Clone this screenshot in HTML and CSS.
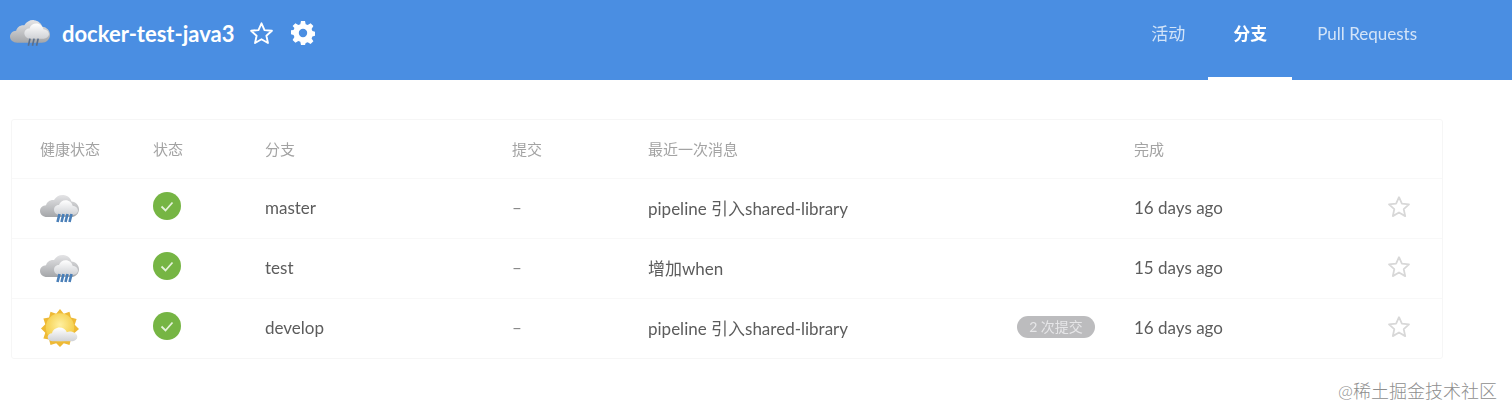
FILE: index.html
```html
<!DOCTYPE html>
<html lang="zh">
<head>
<meta charset="UTF-8" />
<meta name="viewport" content="width=device-width, initial-scale=1" />
<title>docker-test-java3</title>
<link rel="stylesheet" href="styles.css">
</head>
<body>
  <svg class="defs" width="0" height="0" aria-hidden="true">
    <defs>
      <linearGradient id="cloudGrey" x1="0" y1="0" x2="0" y2="1">
        <stop offset="0" stop-color="#e4e4e6" />
        <stop offset="1" stop-color="#a4a6a9" />
      </linearGradient>
      <linearGradient id="cloudLight" x1="0" y1="0" x2="0" y2="1">
        <stop offset="0" stop-color="#ffffff" />
        <stop offset="1" stop-color="#d0d2d6" />
      </linearGradient>
      <radialGradient id="sunFill" cx="0.5" cy="0.4" r="0.6">
        <stop offset="0" stop-color="#fff0a0" />
        <stop offset="1" stop-color="#f3c93f" />
      </radialGradient>
      <symbol id="rain" viewBox="0 0 40 32">
        <path d="M7 24c-4 0-7-2.600-7-6 0-3.200 2.600-5.600 6-5.800C7 8.600 10.400 6.400 14 7c2-3.400 5.600-5.400 9.500-5 4 .4 7 3 8 6.400 4.400.4 7.500 3.800 7.500 7.800 0 4.400-3.500 7.800-8 7.800z" fill="url(#cloudGrey)" />
        <path d="M20 22c-3.600 0-6-2.400-6-5.200 0-2.800 2.200-4.800 5-4.800 1-3 3.600-4.800 6.600-4.800 3.600 0 6.400 2.400 7 5.600 3 .2 5.400 2.400 5.400 4.800 0 2.600-2.400 4.400-5 4.400z" fill="url(#cloudLight)" />
        <path d="M19.500 21l-2 8M23.500 21l-2 8M27.500 21l-2 8M31.500 21l-2 8" stroke="#4a7fb8" stroke-width="2.600" fill="none" />
      </symbol>
      <symbol id="rain-dark" viewBox="0 0 40 32">
        <path d="M7 25c-4 0-7-2.600-7-6 0-3.200 2.600-5.600 6-5.800C7 9.600 10.400 7.400 14 8c2-3.400 5.600-5.400 9.500-5 4 .4 7 3 8 6.400 4.400.4 7.500 3.800 7.500 7.800 0 4.400-3.500 7.800-8 7.800z" fill="url(#cloudGrey)" />
        <path d="M20 21c-3.600 0-6-2.400-6-5.200 0-2.800 2.200-4.800 5-4.800 1-3 3.600-4.800 6.600-4.800 3.600 0 6.400 2.400 7 5.600 3 .2 5.400 2.400 5.400 4.800 0 2.600-2.400 4.400-5 4.400z" fill="url(#cloudLight)" />
        <path d="M19.500 21l-1.600 7M23.500 21l-1.600 7M27.500 21l-1.600 7" stroke="#5a6f8c" stroke-width="1.600" fill="none" />
      </symbol>
      <symbol id="sun" viewBox="0 0 40 40">
        <path d="M20 0l4 5 6-2 1.500 6 6 1.500-2 6 4.500 4.500-4.500 4 2 6-6 1-1.500 6-6-2-4 4-4-4-6 2-1.500-6-6-1 2-6L0 20.500l4.500-4.500-2-6L8.500 9 10 3l6 2z" fill="#eeb935" />
        <circle cx="20" cy="19.500" r="15" fill="url(#sunFill)" />
        <path d="M12 34c-3 0-5-2-5-4.400 0-2.400 2-4.200 4.600-4.200 1-3.400 4.200-5.800 8-5.800 3.400 0 6.400 1.800 7.600 4.800 1-.4 2-.6 3-.6 4.400 0 8 2.600 8 5.400 0 2.800-2.800 4.800-6 4.800z" fill="url(#cloudLight)" />
      </symbol>
      <symbol id="ok" viewBox="0 0 28 28">
        <circle cx="14" cy="14" r="14" fill="#76b544" />
        <path d="M8.500 14.500l4 4 7-8" stroke="#e4f2d8" stroke-width="1.800" fill="none" />
      </symbol>
      <symbol id="star" viewBox="0 0 24 24">
        <path d="M12 2.200l2.900 6.500 7.100.7-5.300 4.700 1.500 7-6.200-3.600-6.200 3.600 1.500-7L2 9.400l7.100-.7z" fill="none" stroke="currentColor" stroke-width="1.800" stroke-linejoin="round" />
      </symbol>
    </defs>
  </svg>

  <div class="app">
    <header class="topbar">
      <div class="project">
        <svg class="project-weather"><use href="#rain-dark" /></svg>
        <h1>docker-test-java3</h1>
        <svg class="project-star"><use href="#star" /></svg>
        <svg class="project-gear" viewBox="0 0 24 24">
          <path fill="#fff" fill-rule="evenodd" d="M10 0h4l.7 3.300 2 .8L19.600 2.300l2.800 2.800-1.800 2.900.8 2 2.600.7v4l-2.600.7-.8 2 1.800 2.900-2.800 2.800-2.900-1.800-2 .8L14 24h-4l-.7-3.300-2-.8-2.900 1.800-2.800-2.800L3.400 16l-.8-2L0 13.300v-4L2.600 9l.8-2-1.800-1.900 2.800-2.800 2.900 1.800 2-.8zM12 7.800a4.200 4.200 0 1 0 0 8.400 4.200 4.200 0 0 0 0-8.400z" />
        </svg>
      </div>
      <nav class="tabs">
        <a class="tab tab-first">活动</a>
        <a class="tab tab-active">分支</a>
        <a class="tab tab-pr">Pull Requests</a>
      </nav>
    </header>

    <main class="content">
      <div class="branches">
        <div class="row row-head">
          <span>健康状态</span>
          <span>状态</span>
          <span>分支</span>
          <span>提交</span>
          <span>最近一次消息</span>
          <span>完成</span>
          <span></span>
        </div>
        <div class="row">
          <svg class="weather"><use href="#rain" /></svg>
          <svg class="status"><use href="#ok" /></svg>
          <span>master</span>
          <span class="dash">–</span>
          <span class="message">pipeline 引入shared-library</span>
          <span>16 days ago</span>
          <svg class="fav"><use href="#star" /></svg>
        </div>
        <div class="row">
          <svg class="weather"><use href="#rain" /></svg>
          <svg class="status"><use href="#ok" /></svg>
          <span>test</span>
          <span class="dash">–</span>
          <span class="message">增加when</span>
          <span>15 days ago</span>
          <svg class="fav"><use href="#star" /></svg>
        </div>
        <div class="row">
          <svg class="weather weather-sun"><use href="#sun" /></svg>
          <svg class="status"><use href="#ok" /></svg>
          <span>develop</span>
          <span class="dash">–</span>
          <span class="message">pipeline 引入shared-library<span class="badge">2 次提交</span></span>
          <span>16 days ago</span>
          <svg class="fav"><use href="#star" /></svg>
        </div>
      </div>
    </main>
  </div>

  <div class="watermark">@稀土掘金技术社区</div>
</body>
</html>
```

FILE: styles.css
```css
html, body {
  margin: 0;
  height: 416px;
  overflow: hidden;
  background: white;
}
body {
  position: relative;
  font-family: Lato, "Noto Sans CJK SC", sans-serif;
  color: #5c5c5c;
}
.defs {
  position: absolute;
}
.app {
  filter: blur(0.6px);
}
.topbar {
  height: 80px;
  box-sizing: border-box;
  background-color: #4a8ee2;
  display: flex;
  justify-content: space-between;
  color: white;
}
.project {
  display: flex;
  align-items: center;
  height: 66px;
  padding-left: 10px;
}
.project-weather {
  width: 41px;
  height: 33px;
  margin-right: 11px;
}
.project h1 {
  margin: 0;
  font-size: 22px;
  font-weight: 700;
}
.project-star {
  width: 25px;
  height: 25px;
  margin-left: 14px;
  color: white;
}
.project-gear {
  width: 24px;
  height: 24px;
  margin-left: 17px;
}
.tabs {
  display: flex;
  margin-right: 95px;
}
.tab {
  display: block;
  box-sizing: border-box;
  height: 80px;
  padding: 24px 0 0;
  width: 84px;
  text-align: center;
  font-size: 17px;
  line-height: 20px;
  color: #d3e4f8;
}
.tab-first {
  padding-left: 4px;
}
.tab-active {
  color: white;
  font-weight: 700;
  border-bottom: 3px solid white;
}
.tab-pr {
  width: auto;
  padding-left: 25px;
}
.content {
  padding: 39px 69px 0 11px;
}
.branches {
  border: 1px solid #f6f6f6;
  border-radius: 3px;
}
.row {
  display: grid;
  grid-template-columns: 113px 112px 247px 136px 486px 254px 1fr;
  align-items: center;
  height: 60px;
  padding: 0 0 2px 28px;
  font-size: 17px;
  border-top: 1px solid #f8f8f8;
  box-sizing: border-box;
}
.row-head {
  height: 58px;
  border-top: none;
  font-size: 15px;
  color: #a3a3a3;
}
.weather {
  width: 40px;
  height: 32px;
  margin-top: 2px;
}
.weather-sun {
  height: 38px;
  margin-top: 0;
}
.status {
  width: 28px;
  height: 28px;
  margin-bottom: 4px;
}
.dash {
  color: #8a8a8a;
}
.message {
  position: relative;
}
.badge {
  position: absolute;
  right: 39px;
  top: 1px;
  width: 78px;
  height: 22px;
  border-radius: 11px;
  background-color: #bcbcbe;
  color: #e6e6e8;
  font-size: 14px;
  line-height: 22px;
  text-align: center;
}
.fav {
  width: 24px;
  height: 24px;
  margin: 0 0 2px -1px;
  color: #d8d8d8;
}
.watermark {
  position: absolute;
  left: 1338px;
  top: 380px;
  font-size: 18px;
  line-height: 22px;
  color: #8e8e8e;
  font-weight: 300;
  white-space: nowrap;
}
```
